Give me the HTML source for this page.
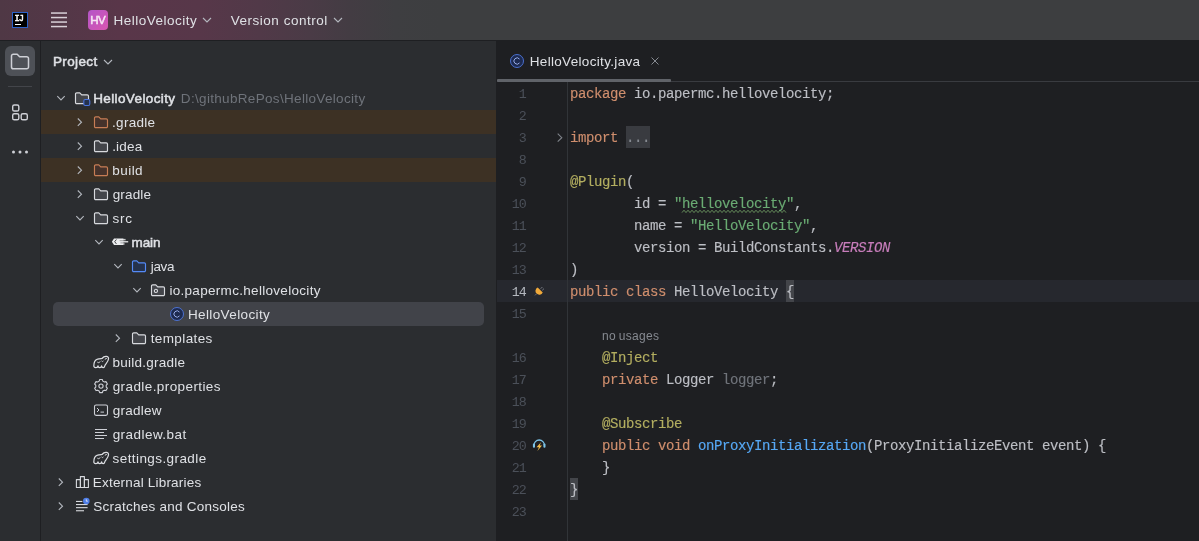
<!DOCTYPE html>
<html lang="en"><head><meta charset="utf-8"><title>HelloVelocity</title>
<style>
*{margin:0;padding:0;box-sizing:border-box}
html,body{width:1199px;height:541px;overflow:hidden;background:#1e1f22}
body{position:relative;font-family:"Liberation Sans",sans-serif;font-size:13.5px;color:#dfe1e5;-webkit-font-smoothing:antialiased}
#app{position:absolute;left:0;top:0;width:1199px;height:541px}
#txt{position:absolute;left:0;top:0;width:1199px;height:541px;will-change:transform}
.abs{position:absolute}
#title{left:0;top:0;width:1199px;height:40px;background:linear-gradient(90deg,#4f3845 0px,#533747 60px,#593649 120px,#573749 200px,#513948 260px,#4a3b46 310px,#433c43 350px,#3e3e41 395px,#3d3e40 440px,#3d3e40 1199px);}
#titleline{left:0;top:40px;width:1199px;height:1px;background:#1e1f22}
#stripe{left:0;top:41px;width:40px;height:500px;background:#2b2d30}
#stripeline{left:40px;top:41px;width:1px;height:500px;background:#1e1f22}
#panel{left:41px;top:41px;width:455px;height:500px;background:#2b2d30}
#editor{left:496px;top:41px;width:703px;height:500px;background:#1e1f22}
.t{position:absolute;white-space:pre;line-height:24px;height:24px}
.b{-webkit-text-stroke:0.5px}
.row{position:absolute;left:41px;width:455px;height:24px}
.excl{background:#3d3124}
.sel{position:absolute;left:53px;top:302px;width:431px;height:24px;border-radius:5px;background:#414349}
.ic{position:absolute;width:16px;height:16px;overflow:visible}
.code{position:absolute;left:570px;white-space:pre;font-family:"Liberation Mono",monospace;font-size:14px;line-height:22px;height:22px;color:#bcbec4;letter-spacing:-0.4px;-webkit-text-stroke:0.15px}
.ln{position:absolute;left:497px;width:28.9px;text-align:right;white-space:pre;font-family:"Liberation Mono",monospace;font-size:13.333px;line-height:22px;height:22px;color:#4b5059;letter-spacing:-0.9px}
.k{color:#cf8e6d}.s{color:#6aab73}.a{color:#b3ae60}.m{color:#56a8f5}.f{color:#c77dbb;font-style:italic}.u{color:#6f737a}

.fold{color:#868a91}
.typo{text-decoration:underline wavy #5d8a5f;text-decoration-thickness:1px;text-underline-offset:2px}

</style></head>
<body>
<div id="app">
<div id="title" class="abs"></div><div id="titleline" class="abs"></div>
<div class="abs" style="left:12px;top:12px;width:16px;height:16px;background:#000;border:1px solid #2c62c8"></div>
<div class="abs" style="left:15px;top:24px;width:6px;height:1px;background:#fff"></div>
<svg class="abs" style="left:50px;top:11px" width="18" height="18" viewBox="0 0 18 18"><g fill="#d9d0d8"><rect x="1" y="1.3" width="16" height="1.5"/><rect x="1" y="5.8" width="16" height="1.5"/><rect x="1" y="10.3" width="16" height="1.5"/><rect x="1" y="14.8" width="16" height="1.5"/></g></svg>
<div class="abs" style="left:88px;top:10px;width:20px;height:20px;border-radius:4px;background:linear-gradient(135deg,#b455c8 0%,#d956b0 100%)"></div>
<svg class="abs" style="left:201px;top:15px" width="12" height="10" viewBox="0 0 12 10"><path d="M2 3 L6 7 L10 3" fill="none" stroke="#b4b8bf" stroke-width="1.1"/></svg>
<svg class="abs" style="left:332px;top:15px" width="12" height="10" viewBox="0 0 12 10"><path d="M2 3 L6 7 L10 3" fill="none" stroke="#b4b8bf" stroke-width="1.1"/></svg>
<div id="stripe" class="abs"></div><div id="stripeline" class="abs"></div>
<div class="abs" style="left:5px;top:46px;width:30px;height:30px;border-radius:6px;background:#4e5157"></div>
<svg class="abs" style="left:10px;top:51px" width="20" height="20" viewBox="0 0 20 20"><path d="M1.5 5 a1.8 1.8 0 0 1 1.8 -1.8 h3.9 l2.4 2.6 h7.1 a1.8 1.8 0 0 1 1.8 1.8 v8.3 a1.8 1.8 0 0 1 -1.8 1.8 h-13.4 a1.8 1.8 0 0 1 -1.8 -1.8 z" fill="none" stroke="#ced0d6" stroke-width="1.5" stroke-linejoin="round"/></svg>
<div class="abs" style="left:8px;top:86px;width:24px;height:1px;background:#43454a"></div>
<svg class="abs" style="left:10px;top:102px" width="20" height="20" viewBox="0 0 20 20"><g fill="none" stroke="#ced0d6" stroke-width="1.4"><rect x="2.7" y="2.95" width="6.1" height="6.1" rx="1.6"/><rect x="2.7" y="11.7" width="6.1" height="6.1" rx="1.6"/><rect x="11.2" y="11.7" width="6.1" height="6.1" rx="1.6"/></g></svg>
<svg class="abs" style="left:10px;top:142px" width="20" height="20" viewBox="0 0 20 20"><g fill="#ced0d6"><circle cx="3.5" cy="10" r="1.5"/><circle cx="10" cy="10" r="1.5"/><circle cx="16.5" cy="10" r="1.5"/></g></svg>
<div id="panel" class="abs"></div>
<svg class="abs" style="left:102px;top:57px" width="12" height="10" viewBox="0 0 12 10"><path d="M2 3 L6 7 L10 3" fill="none" stroke="#b4b8bf" stroke-width="1.1"/></svg>
<div class="row excl" style="top:110px"></div>
<div class="row excl" style="top:158px"></div>
<div class="sel"></div>
<svg class="ic" style="left:53px;top:90px" viewBox="0 0 16 16"><path d="M4.3 6.2 L8 9.9 L11.7 6.2" fill="none" stroke="#b4b8bf" stroke-width="1.1"/></svg>
<svg class="ic" style="left:74px;top:90px" viewBox="0 0 16 16"><path d="M1.5 4 a1.2 1.2 0 0 1 1.2 -1.2 h3.1 l1.9 2 h5.6 a1.2 1.2 0 0 1 1.2 1.2 v6.4 a1.2 1.2 0 0 1 -1.2 1.2 h-10.6 a1.2 1.2 0 0 1 -1.2 -1.2 z" fill="#43454a" stroke="#d8dade" stroke-width="1.15" stroke-linejoin="round"/><rect x="9.8" y="9.5" width="6" height="6" rx="1.4" fill="#25324d" stroke="#4a74de" stroke-width="1.1"/></svg>
<svg class="ic" style="left:72px;top:114px" viewBox="0 0 16 16"><path d="M5.8 4.5 L9.5 8.2 L5.8 11.9" fill="none" stroke="#b4b8bf" stroke-width="1.1"/></svg>
<svg class="ic" style="left:93px;top:114px" viewBox="0 0 16 16"><path d="M1.5 4 a1.2 1.2 0 0 1 1.2 -1.2 h3.1 l1.9 2 h5.6 a1.2 1.2 0 0 1 1.2 1.2 v6.4 a1.2 1.2 0 0 1 -1.2 1.2 h-10.6 a1.2 1.2 0 0 1 -1.2 -1.2 z" fill="#45322b" stroke="#c77d55" stroke-width="1.15" stroke-linejoin="round"/></svg>
<svg class="ic" style="left:72px;top:138px" viewBox="0 0 16 16"><path d="M5.8 4.5 L9.5 8.2 L5.8 11.9" fill="none" stroke="#b4b8bf" stroke-width="1.1"/></svg>
<svg class="ic" style="left:93px;top:138px" viewBox="0 0 16 16"><path d="M1.5 4 a1.2 1.2 0 0 1 1.2 -1.2 h3.1 l1.9 2 h5.6 a1.2 1.2 0 0 1 1.2 1.2 v6.4 a1.2 1.2 0 0 1 -1.2 1.2 h-10.6 a1.2 1.2 0 0 1 -1.2 -1.2 z" fill="#43454a" stroke="#d8dade" stroke-width="1.15" stroke-linejoin="round"/></svg>
<svg class="ic" style="left:72px;top:162px" viewBox="0 0 16 16"><path d="M5.8 4.5 L9.5 8.2 L5.8 11.9" fill="none" stroke="#b4b8bf" stroke-width="1.1"/></svg>
<svg class="ic" style="left:93px;top:162px" viewBox="0 0 16 16"><path d="M1.5 4 a1.2 1.2 0 0 1 1.2 -1.2 h3.1 l1.9 2 h5.6 a1.2 1.2 0 0 1 1.2 1.2 v6.4 a1.2 1.2 0 0 1 -1.2 1.2 h-10.6 a1.2 1.2 0 0 1 -1.2 -1.2 z" fill="#45322b" stroke="#c77d55" stroke-width="1.15" stroke-linejoin="round"/></svg>
<svg class="ic" style="left:72px;top:186px" viewBox="0 0 16 16"><path d="M5.8 4.5 L9.5 8.2 L5.8 11.9" fill="none" stroke="#b4b8bf" stroke-width="1.1"/></svg>
<svg class="ic" style="left:93px;top:186px" viewBox="0 0 16 16"><path d="M1.5 4 a1.2 1.2 0 0 1 1.2 -1.2 h3.1 l1.9 2 h5.6 a1.2 1.2 0 0 1 1.2 1.2 v6.4 a1.2 1.2 0 0 1 -1.2 1.2 h-10.6 a1.2 1.2 0 0 1 -1.2 -1.2 z" fill="#43454a" stroke="#d8dade" stroke-width="1.15" stroke-linejoin="round"/></svg>
<svg class="ic" style="left:72px;top:210px" viewBox="0 0 16 16"><path d="M4.3 6.2 L8 9.9 L11.7 6.2" fill="none" stroke="#b4b8bf" stroke-width="1.1"/></svg>
<svg class="ic" style="left:93px;top:210px" viewBox="0 0 16 16"><path d="M1.5 4 a1.2 1.2 0 0 1 1.2 -1.2 h3.1 l1.9 2 h5.6 a1.2 1.2 0 0 1 1.2 1.2 v6.4 a1.2 1.2 0 0 1 -1.2 1.2 h-10.6 a1.2 1.2 0 0 1 -1.2 -1.2 z" fill="#43454a" stroke="#d8dade" stroke-width="1.15" stroke-linejoin="round"/></svg>
<svg class="ic" style="left:91px;top:234px" viewBox="0 0 16 16"><path d="M4.3 6.2 L8 9.9 L11.7 6.2" fill="none" stroke="#b4b8bf" stroke-width="1.1"/></svg>
<svg class="ic" style="left:112px;top:234px" viewBox="0 0 16 16"><path d="M-0.1 7.7 L2 4.5 H11.4 V10.9 H2 Z" fill="#ecedef"/><g fill="#ecedef"><rect x="11" y="4.9" width="2.6" height="1.5" opacity="0.8"/><rect x="11" y="7" width="5.2" height="1.5" opacity="0.85"/><rect x="11" y="9.2" width="1.6" height="1.5" opacity="0.7"/></g><path d="M4.4 5.5 L2.7 7.7 L4.4 9.9" fill="none" stroke="#2b2d30" stroke-width="0.9"/><path d="M7.6 6.7 H11.4 M8.4 8.9 H11.4" fill="none" stroke="#2b2d30" stroke-width="0.5" opacity="0.8"/></svg>
<svg class="ic" style="left:110px;top:258px" viewBox="0 0 16 16"><path d="M4.3 6.2 L8 9.9 L11.7 6.2" fill="none" stroke="#b4b8bf" stroke-width="1.1"/></svg>
<svg class="ic" style="left:131px;top:258px" viewBox="0 0 16 16"><path d="M1.5 4 a1.2 1.2 0 0 1 1.2 -1.2 h3.1 l1.9 2 h5.6 a1.2 1.2 0 0 1 1.2 1.2 v6.4 a1.2 1.2 0 0 1 -1.2 1.2 h-10.6 a1.2 1.2 0 0 1 -1.2 -1.2 z" fill="#25324d" stroke="#548af7" stroke-width="1.15" stroke-linejoin="round"/></svg>
<svg class="ic" style="left:129px;top:282px" viewBox="0 0 16 16"><path d="M4.3 6.2 L8 9.9 L11.7 6.2" fill="none" stroke="#b4b8bf" stroke-width="1.1"/></svg>
<svg class="ic" style="left:150px;top:282px" viewBox="0 0 16 16"><path d="M1.5 4 a1.2 1.2 0 0 1 1.2 -1.2 h3.1 l1.9 2 h5.6 a1.2 1.2 0 0 1 1.2 1.2 v6.4 a1.2 1.2 0 0 1 -1.2 1.2 h-10.6 a1.2 1.2 0 0 1 -1.2 -1.2 z" fill="#43454a" stroke="#d8dade" stroke-width="1.15" stroke-linejoin="round"/><circle cx="5.9" cy="8.9" r="1.6" fill="none" stroke="#dfe1e5" stroke-width="1.1"/></svg>
<svg class="ic" style="left:169px;top:306px" viewBox="0 0 16 16"><circle cx="8" cy="8" r="6.5" fill="#1d2a50" stroke="#4f78e0" stroke-width="0.9"/><path d="M10.5 6.1 a3.1 3.1 0 1 0 0 3.8" fill="none" stroke="#9db2ee" stroke-width="0.95"/></svg>
<svg class="ic" style="left:110px;top:330px" viewBox="0 0 16 16"><path d="M5.8 4.5 L9.5 8.2 L5.8 11.9" fill="none" stroke="#b4b8bf" stroke-width="1.1"/></svg>
<svg class="ic" style="left:131px;top:330px" viewBox="0 0 16 16"><path d="M1.5 4 a1.2 1.2 0 0 1 1.2 -1.2 h3.1 l1.9 2 h5.6 a1.2 1.2 0 0 1 1.2 1.2 v6.4 a1.2 1.2 0 0 1 -1.2 1.2 h-10.6 a1.2 1.2 0 0 1 -1.2 -1.2 z" fill="#43454a" stroke="#d8dade" stroke-width="1.15" stroke-linejoin="round"/></svg>
<svg class="ic" style="left:93px;top:354px" viewBox="0 0 16 16"><g fill="none" stroke="#dcdee2" stroke-width="1.25" stroke-linejoin="round" stroke-linecap="round"><path d="M0.8 12.2 C0.8 9 2 5.8 4.5 5.1 C6 4.6 7.6 4.6 9 4.5 C10.2 3 11.8 2.3 13.3 2.4 C14.9 2.5 15.7 3.6 15.5 5 C15.2 7 14 8.6 13 9.8 C12.2 10.8 11.9 11.4 11.7 12.2 C11.3 14.2 9 14.2 8.6 11.9 C8.2 14.2 5.4 14.2 5 11.9 C4.6 14.2 1.2 14.2 0.8 12.2 Z"/><path d="M12.2 5.2 C12.3 4.2 13.4 4 13.8 4.7" stroke-width="1"/><path d="M4.6 8.4 C5.4 9.1 6.6 8.8 7 7.8 M8.8 7.2 C9.2 7.7 9.8 7.7 10.2 7.2" stroke-width="1" opacity="0.9"/></g></svg>
<svg class="ic" style="left:93px;top:378px" viewBox="0 0 16 16"><path d="M6.61 1.55 L9.39 1.55 L9.81 3.12 L11.41 4.04 L12.98 3.62 L14.37 6.03 L13.22 7.18 L13.22 9.02 L14.37 10.17 L12.98 12.58 L11.41 12.16 L9.81 13.08 L9.39 14.65 L6.61 14.65 L6.19 13.08 L4.59 12.16 L3.02 12.58 L1.63 10.17 L2.78 9.02 L2.78 7.18 L1.63 6.03 L3.02 3.62 L4.59 4.04 L6.19 3.12 Z" fill="none" stroke="#ced0d6" stroke-width="1.1" stroke-linejoin="round"/><circle cx="8" cy="8.1" r="2.1" fill="none" stroke="#ced0d6" stroke-width="1.1"/></svg>
<svg class="ic" style="left:93px;top:402px" viewBox="0 0 16 16"><rect x="1.5" y="3" width="13" height="10.4" rx="1.6" fill="none" stroke="#ced0d6" stroke-width="1.1"/><path d="M4 6 l2 2 l-2 2" fill="none" stroke="#ced0d6" stroke-width="1"/><rect x="7.5" y="9.6" width="3.5" height="1" fill="#ced0d6"/></svg>
<svg class="ic" style="left:93px;top:426px" viewBox="0 0 16 16"><g fill="#ced0d6"><rect x="2" y="3" width="12" height="1"/><rect x="2" y="6" width="9" height="1"/><rect x="2" y="9" width="12" height="1"/><rect x="2" y="12" width="9" height="1"/></g></svg>
<svg class="ic" style="left:93px;top:450px" viewBox="0 0 16 16"><g fill="none" stroke="#dcdee2" stroke-width="1.25" stroke-linejoin="round" stroke-linecap="round"><path d="M0.8 12.2 C0.8 9 2 5.8 4.5 5.1 C6 4.6 7.6 4.6 9 4.5 C10.2 3 11.8 2.3 13.3 2.4 C14.9 2.5 15.7 3.6 15.5 5 C15.2 7 14 8.6 13 9.8 C12.2 10.8 11.9 11.4 11.7 12.2 C11.3 14.2 9 14.2 8.6 11.9 C8.2 14.2 5.4 14.2 5 11.9 C4.6 14.2 1.2 14.2 0.8 12.2 Z"/><path d="M12.2 5.2 C12.3 4.2 13.4 4 13.8 4.7" stroke-width="1"/><path d="M4.6 8.4 C5.4 9.1 6.6 8.8 7 7.8 M8.8 7.2 C9.2 7.7 9.8 7.7 10.2 7.2" stroke-width="1" opacity="0.9"/></g></svg>
<svg class="ic" style="left:53px;top:474px" viewBox="0 0 16 16"><path d="M5.8 4.5 L9.5 8.2 L5.8 11.9" fill="none" stroke="#b4b8bf" stroke-width="1.1"/></svg>
<svg class="ic" style="left:74px;top:474px" viewBox="0 0 16 16"><g fill="none" stroke="#d8dade" stroke-width="1.1" stroke-linejoin="round"><rect x="2.4" y="5.6" width="4" height="7.9"/><rect x="6.4" y="2.6" width="4" height="10.9"/><rect x="10.4" y="5.6" width="4" height="7.9"/></g></svg>
<svg class="ic" style="left:53px;top:498px" viewBox="0 0 16 16"><path d="M5.8 4.5 L9.5 8.2 L5.8 11.9" fill="none" stroke="#b4b8bf" stroke-width="1.1"/></svg>
<svg class="ic" style="left:74px;top:498px" viewBox="0 0 16 16"><g fill="#d8dade"><rect x="2" y="2.9" width="6.4" height="1.1"/><rect x="2" y="6" width="11.6" height="1.1"/><rect x="2" y="9.1" width="11.6" height="1.1"/><rect x="2" y="12.2" width="8" height="1.1"/></g><circle cx="12.3" cy="3" r="3.3" fill="#4f7fe8"/><path d="M12.3 1.3 v1.9 h1.5" fill="none" stroke="#e6e9f2" stroke-width="0.9"/></svg>
<div id="editor" class="abs"></div>
<svg class="ic" style="left:509px;top:53px" viewBox="0 0 16 16"><circle cx="8" cy="8" r="6.5" fill="#1d2a50" stroke="#4f78e0" stroke-width="0.9"/><path d="M10.5 6.1 a3.1 3.1 0 1 0 0 3.8" fill="none" stroke="#9db2ee" stroke-width="0.95"/></svg>
<svg class="abs" style="left:650px;top:56px" width="10" height="10" viewBox="0 0 10 10"><path d="M1.5 1.5 L8.5 8.5 M8.5 1.5 L1.5 8.5" fill="none" stroke="#868a91" stroke-width="1"/></svg>
<div class="abs" style="left:497px;top:81px;width:702px;height:1px;background:#393b40"></div>
<div class="abs" style="left:497px;top:79px;width:174px;height:3px;background:#606369;border-radius:1px"></div>
<div class="abs" style="left:497px;top:280px;width:702px;height:22px;background:#26282e"></div>
<div class="abs" style="left:567px;top:82px;width:1px;height:459px;background:#313438"></div>
<div class="abs" style="left:626px;top:126px;width:24px;height:22px;background:#393b40"></div>
<div class="abs" style="left:786px;top:280px;width:8px;height:22px;background:#43454a"></div>
<div class="abs" style="left:570px;top:478px;width:8px;height:22px;background:#43454a"></div>
<svg class="abs" style="left:0;top:0" width="1199" height="541"><polyline points="682,212.6 684,210.2 686,212.6 688,210.2 690,212.6 692,210.2 694,212.6 696,210.2 698,212.6 700,210.2 702,212.6 704,210.2 706,212.6 708,210.2 710,212.6 712,210.2 714,212.6 716,210.2 718,212.6 720,210.2 722,212.6 724,210.2 726,212.6 728,210.2 730,212.6 732,210.2 734,212.6 736,210.2 738,212.6 740,210.2 742,212.6 744,210.2 746,212.6 748,210.2 750,212.6 752,210.2 754,212.6 756,210.2 758,212.6 760,210.2 762,212.6 764,210.2 766,212.6 768,210.2 770,212.6 772,210.2 774,212.6 776,210.2 778,212.6 780,210.2 782,212.6 784,210.2 786,212.6" fill="none" stroke="#6b9560" stroke-width="0.9"/></svg>
<svg class="abs" style="left:555px;top:132px" width="11" height="11" viewBox="0 0 11 11"><path d="M2.7 1.7 L6.8 5.7 L2.7 9.7" fill="none" stroke="#7f838a" stroke-width="1.1"/></svg>
<svg class="abs" style="left:533px;top:285px" width="12" height="12" viewBox="0 0 12 12"><path d="M7.8 3.6 L9.2 2.2 M9.4 5.2 L10.8 3.8" fill="none" stroke="#8d9199" stroke-width="1"/><path d="M3.6 8.8 L2 10.4" fill="none" stroke="#6a6e75" stroke-width="1"/><path d="M4.7 2.46 A3.8 3.8 0 1 0 9.74 7.5 Z" fill="#f0a93a"/></svg>
<svg class="abs" style="left:532px;top:438px" width="14" height="14" viewBox="0 0 14 14"><path d="M1.9 7.6 A5.3 5.6 0 0 1 12.5 7.6" fill="none" stroke="#7cc4e8" stroke-width="1.3"/><rect x="0.9" y="5.6" width="2.1" height="4.2" rx="1" fill="#7cc4e8"/><rect x="11.4" y="5.6" width="2.1" height="4.2" rx="1" fill="#7cc4e8"/><path d="M9 4.3 L4.5 9.3 H7 L5.4 13.1 L10 7.6 H7.7 Z" fill="#f6c04a"/></svg>
</div>
<div id="txt">
<div class="t b" style="left:14.6px;top:14px;height:10px;line-height:10px;font-family:'Liberation Mono',monospace;font-size:8.6px;letter-spacing:-1px;color:#fff">IJ</div>
<div class="t b" style="left:88px;top:8px;width:20px;text-align:center;font-size:11.5px;color:#f6e6f3;letter-spacing:-0.5px;text-indent:-0.5px" id="hv">HV</div>
<div class="t" style="left:113.44px;top:9px;letter-spacing:0.493px" id="t_title">HelloVelocity</div>
<div class="t" style="left:230.71px;top:9px;letter-spacing:0.521px" id="t_vc">Version control</div>
<div class="t b" style="left:52.89px;top:50px;letter-spacing:0.387px" id="t_project">Project</div>
<div class="t b" style="left:93.19px;top:87px;letter-spacing:0.382px" id="tr0">HelloVelocity</div>
<div class="t" style="left:180.84px;top:87px;letter-spacing:0.323px;color:#6f737a" id="tr0x">D:\githubRePos\HelloVelocity</div>
<div class="t" style="left:112.04px;top:111px;letter-spacing:0.302px" id="tr1">.gradle</div>
<div class="t" style="left:112.14px;top:135px;letter-spacing:0.217px" id="tr2">.idea</div>
<div class="t" style="left:112.32px;top:159px;letter-spacing:0.441px" id="tr3">build</div>
<div class="t" style="left:112.66px;top:183px;letter-spacing:0.171px" id="tr4">gradle</div>
<div class="t" style="left:112.62px;top:207px;letter-spacing:0.654px" id="tr5">src</div>
<div class="t b" style="left:131.55px;top:231px;letter-spacing:-0.109px" id="tr6">main</div>
<div class="t" style="left:150.77px;top:255px;letter-spacing:-0.339px" id="tr7">java</div>
<div class="t" style="left:169.40px;top:279px;letter-spacing:0.304px" id="tr8">io.papermc.hellovelocity</div>
<div class="t" style="left:187.94px;top:303px;letter-spacing:0.384px" id="tr9">HelloVelocity</div>
<div class="t" style="left:150.63px;top:327px;letter-spacing:0.399px" id="tr10">templates</div>
<div class="t" style="left:112.42px;top:351px;letter-spacing:0.26px" id="tr11">build.gradle</div>
<div class="t" style="left:112.66px;top:375px;letter-spacing:0.411px" id="tr12">gradle.properties</div>
<div class="t" style="left:112.66px;top:399px;letter-spacing:0.27px" id="tr13">gradlew</div>
<div class="t" style="left:112.66px;top:423px;letter-spacing:0.452px" id="tr14">gradlew.bat</div>
<div class="t" style="left:112.62px;top:447px;letter-spacing:0.411px" id="tr15">settings.gradle</div>
<div class="t" style="left:92.84px;top:471px;letter-spacing:0.193px" id="tr16">External Libraries</div>
<div class="t" style="left:93.20px;top:495px;letter-spacing:0.249px" id="tr17">Scratches and Consoles</div>
<div class="t" style="left:529.74px;top:50px;letter-spacing:0.324px" id="t_tab">HelloVelocity.java</div>
<div class="ln" style="top:83.5px;color:#4b5059">1</div>
<div class="code" style="top:83.0px"><span class="k">package</span> io.papermc.hellovelocity;</div>
<div class="ln" style="top:105.5px;color:#4b5059">2</div>
<div class="ln" style="top:127.5px;color:#4b5059">3</div>
<div class="code" style="top:127.0px"><span class="k">import</span> <span class="fold">...</span></div>
<div class="ln" style="top:149.5px;color:#4b5059">8</div>
<div class="ln" style="top:171.5px;color:#4b5059">9</div>
<div class="code" style="top:171.0px"><span class="a">@Plugin</span>(</div>
<div class="ln" style="top:193.5px;color:#4b5059">10</div>
<div class="code" style="top:193.0px">        id = <span class="s">"hellovelocity"</span>,</div>
<div class="ln" style="top:215.5px;color:#4b5059">11</div>
<div class="code" style="top:215.0px">        name = <span class="s">"HelloVelocity"</span>,</div>
<div class="ln" style="top:237.5px;color:#4b5059">12</div>
<div class="code" style="top:237.0px">        version = BuildConstants.<span class="f">VERSION</span></div>
<div class="ln" style="top:259.5px;color:#4b5059">13</div>
<div class="code" style="top:259.0px">)</div>
<div class="ln" style="top:281.5px;color:#b4b8bf">14</div>
<div class="code" style="top:281.0px"><span class="k">public class</span> HelloVelocity {</div>
<div class="ln" style="top:303.5px;color:#4b5059">15</div>
<div class="t" style="left:602px;top:324.5px;line-height:22px;height:22px;font-size:12px;color:#868a91;letter-spacing:0.3px;word-spacing:-0.9px" id="t_nou">no usages</div>
<div class="ln" style="top:347.5px;color:#4b5059">16</div>
<div class="code" style="top:347.0px">    <span class="a">@Inject</span></div>
<div class="ln" style="top:369.5px;color:#4b5059">17</div>
<div class="code" style="top:369.0px">    <span class="k">private</span> Logger <span class="u">logger</span>;</div>
<div class="ln" style="top:391.5px;color:#4b5059">18</div>
<div class="ln" style="top:413.5px;color:#4b5059">19</div>
<div class="code" style="top:413.0px">    <span class="a">@Subscribe</span></div>
<div class="ln" style="top:435.5px;color:#4b5059">20</div>
<div class="code" style="top:435.0px">    <span class="k">public void</span> <span class="m">onProxyInitialization</span>(ProxyInitializeEvent event) {</div>
<div class="ln" style="top:457.5px;color:#4b5059">21</div>
<div class="code" style="top:457.0px">    }</div>
<div class="ln" style="top:479.5px;color:#4b5059">22</div>
<div class="code" style="top:479.0px">}</div>
<div class="ln" style="top:501.5px;color:#4b5059">23</div>
</div>
</body></html>
